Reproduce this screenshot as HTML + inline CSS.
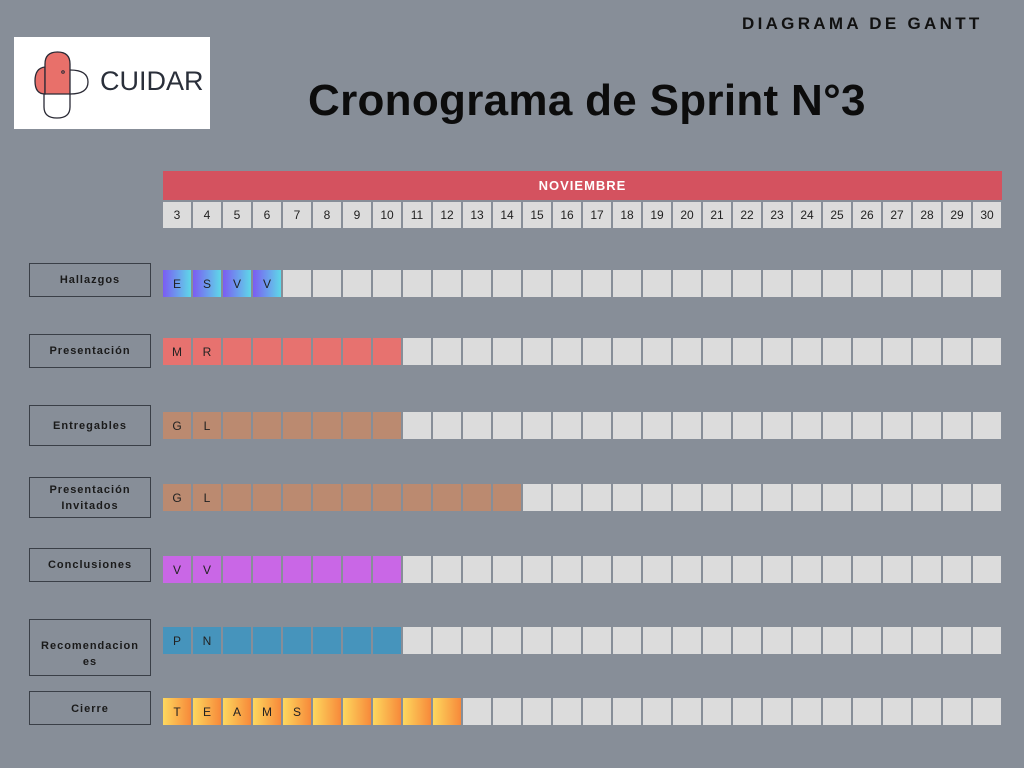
<!DOCTYPE html>
<html><head><meta charset="utf-8"><style>
*{margin:0;padding:0;box-sizing:border-box}
body{width:1024px;height:768px;background:#878e98;position:relative;overflow:hidden;font-family:"Liberation Sans",sans-serif}
.abs{position:absolute}
.row{position:absolute;left:163px;display:flex;gap:2px}
.row div{width:28px;height:27px;background:#dcdcdc;font-size:12px;color:#222;display:flex;align-items:center;justify-content:center}
.days div{height:26px;font-size:12px;color:#222}
.lab{position:absolute;left:29px;width:122px;border:1.5px solid #3a3f47;display:flex;align-items:center;justify-content:center;text-align:center;font-size:11px;font-weight:bold;letter-spacing:1px;color:#1a1a1a;line-height:16px}
.g div.c{background:linear-gradient(90deg,#7b5cf2,#5ed8e8)}
.r div.c{background:#e7726f}
.b div.c{background:#bb8a70}
.p div.c{background:#c967e6}
.u div.c{background:#4694bc}
.o div.c{background:linear-gradient(90deg,#fdd85e,#f7893a)}
</style></head><body>
<div class="abs" style="left:742px;top:14px;font-size:17px;font-weight:bold;letter-spacing:3.3px;color:#111">DIAGRAMA DE GANTT</div>
<div class="abs" style="left:14px;top:37px;width:196px;height:92px;background:#fff">
<svg width="196" height="92" viewBox="0 0 196 92">
<path d="M56 33 Q74 33 74 45 Q74 57 56 57" fill="none" stroke="#2a2a35" stroke-width="1.3"/>
<path d="M30 57 L30 70 Q30 81 43 81 Q56 81 56 70 L56 57" fill="none" stroke="#2a2a35" stroke-width="1.3"/>
<path d="M31 30 Q21 31 21 44 Q21 57 31 57 L31 30Z" fill="#e8706a" stroke="#2a2a35" stroke-width="1.3"/>
<path d="M31 57 L31 27 Q31 15 43.5 15 Q56 15 56 27 L56 57 Z" fill="#e8706a" stroke="#2a2a35" stroke-width="1.3"/>
<circle cx="49" cy="35" r="1.3" fill="none" stroke="#2a2a35"/>
<text x="86" y="53" font-family="Liberation Sans,sans-serif" font-size="27" fill="#2a2f3a">CUIDAR</text>
</svg></div>
<div class="abs" style="left:308px;top:76px;font-size:44px;font-weight:bold;color:#0c0c0c;letter-spacing:0.3px">Cronograma de Sprint N°3</div>
<div class="abs" style="left:163px;top:171px;width:839px;height:29px;background:#d4525f;color:#fff;font-size:13px;font-weight:bold;letter-spacing:1px;text-align:center;line-height:29px">NOVIEMBRE</div>
<div class="row days" style="top:202px"><div>3</div><div>4</div><div>5</div><div>6</div><div>7</div><div>8</div><div>9</div><div>10</div><div>11</div><div>12</div><div>13</div><div>14</div><div>15</div><div>16</div><div>17</div><div>18</div><div>19</div><div>20</div><div>21</div><div>22</div><div>23</div><div>24</div><div>25</div><div>26</div><div>27</div><div>28</div><div>29</div><div>30</div></div>

<div class="lab" style="top:263px;height:34px">Hallazgos</div>
<div class="row g" style="top:270px"><div class="c">E</div><div class="c">S</div><div class="c">V</div><div class="c">V</div><div></div><div></div><div></div><div></div><div></div><div></div><div></div><div></div><div></div><div></div><div></div><div></div><div></div><div></div><div></div><div></div><div></div><div></div><div></div><div></div><div></div><div></div><div></div><div></div></div>

<div class="lab" style="top:334px;height:34px">Presentación</div>
<div class="row r" style="top:338px"><div class="c">M</div><div class="c">R</div><div class="c"></div><div class="c"></div><div class="c"></div><div class="c"></div><div class="c"></div><div class="c"></div><div></div><div></div><div></div><div></div><div></div><div></div><div></div><div></div><div></div><div></div><div></div><div></div><div></div><div></div><div></div><div></div><div></div><div></div><div></div><div></div></div>

<div class="lab" style="top:405px;height:41px">Entregables</div>
<div class="row b" style="top:412px"><div class="c">G</div><div class="c">L</div><div class="c"></div><div class="c"></div><div class="c"></div><div class="c"></div><div class="c"></div><div class="c"></div><div></div><div></div><div></div><div></div><div></div><div></div><div></div><div></div><div></div><div></div><div></div><div></div><div></div><div></div><div></div><div></div><div></div><div></div><div></div><div></div></div>

<div class="lab" style="top:477px;height:41px">Presentación<br>Invitados</div>
<div class="row b" style="top:484px"><div class="c">G</div><div class="c">L</div><div class="c"></div><div class="c"></div><div class="c"></div><div class="c"></div><div class="c"></div><div class="c"></div><div class="c"></div><div class="c"></div><div class="c"></div><div class="c"></div><div></div><div></div><div></div><div></div><div></div><div></div><div></div><div></div><div></div><div></div><div></div><div></div><div></div><div></div><div></div><div></div></div>

<div class="lab" style="top:548px;height:34px">Conclusiones</div>
<div class="row p" style="top:556px"><div class="c">V</div><div class="c">V</div><div class="c"></div><div class="c"></div><div class="c"></div><div class="c"></div><div class="c"></div><div class="c"></div><div></div><div></div><div></div><div></div><div></div><div></div><div></div><div></div><div></div><div></div><div></div><div></div><div></div><div></div><div></div><div></div><div></div><div></div><div></div><div></div></div>

<div class="lab" style="top:619px;height:57px;padding-top:12px">Recomendacion<br>es</div>
<div class="row u" style="top:627px"><div class="c">P</div><div class="c">N</div><div class="c"></div><div class="c"></div><div class="c"></div><div class="c"></div><div class="c"></div><div class="c"></div><div></div><div></div><div></div><div></div><div></div><div></div><div></div><div></div><div></div><div></div><div></div><div></div><div></div><div></div><div></div><div></div><div></div><div></div><div></div><div></div></div>

<div class="lab" style="top:691px;height:34px;align-items:flex-start;padding-top:9px">Cierre</div>
<div class="row o" style="top:698px"><div class="c">T</div><div class="c">E</div><div class="c">A</div><div class="c">M</div><div class="c">S</div><div class="c"></div><div class="c"></div><div class="c"></div><div class="c"></div><div class="c"></div><div></div><div></div><div></div><div></div><div></div><div></div><div></div><div></div><div></div><div></div><div></div><div></div><div></div><div></div><div></div><div></div><div></div><div></div></div>
</body></html>
